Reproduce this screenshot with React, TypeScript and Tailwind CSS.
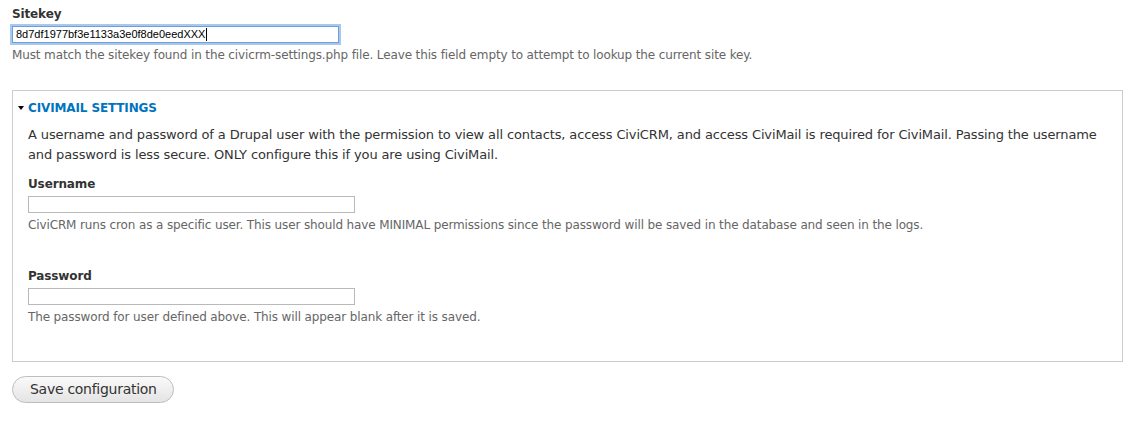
import React from "react";

const FONT = "font-['Lucida_Grande','DejaVu_Sans',sans-serif]";

function Description({ children }: { children: React.ReactNode }) {
  return <div className="mt-[4px] text-[12px] leading-[16px] text-[#666]">{children}</div>;
}

function FormItem({
  label,
  description,
  type = "text",
}: {
  label: string;
  description: string;
  type?: string;
}) {
  return (
    <div>
      <label className="block text-[12px] font-bold leading-[16px] text-[#333]">{label}</label>
      <input
        type={type}
        className="mt-[4px] block h-[17px] w-[327px] border border-[#b9b9b9] bg-white px-[3px] text-[11px] outline-none"
      />
      <Description>{description}</Description>
    </div>
  );
}

export default function App() {
  return (
    <div className={`min-h-screen bg-white px-[12px] pt-[6px] tracking-[-0.008em] text-[#333] ${FONT}`}>
      {/* sitekey */}
      <div>
        <label className="block text-[12px] font-bold leading-[16px]">Sitekey</label>
        <div className="mt-[4px] flex h-[17px] w-[327px] items-center border border-[#6e9fdc] bg-white pl-[3px] font-['Liberation_Sans',Arial,sans-serif] text-[11px] tracking-normal text-black shadow-[0_0_0_2px_#a9c8f0]">
          <span>8d7df1977bf3e1133a3e0f8de0eedXXX</span>
          <span className="ml-px h-[13px] w-px bg-black" />
        </div>
        <Description>
          Must match the sitekey found in the civicrm-settings.php file. Leave this field empty to attempt to lookup the current site key.
        </Description>
      </div>

      {/* civimail fieldset */}
      <div className="mt-[27px] border border-[#cccccc] px-[15px] pb-[36px] pt-[9px]">
        <div className="flex items-center text-[12px] font-bold uppercase leading-[16px] text-[#0074bd]">
          <span className="ml-[-10px] mr-[4px] h-0 w-0 border-x-[3px] border-t-[4px] border-x-transparent border-t-black" />
          CiviMail Settings
        </div>
        <p className="mt-[9px] text-[13px] leading-[20px] text-[#333]">
          A username and password of a Drupal user with the permission to view all contacts, access CiviCRM, and access
          CiviMail is required for CiviMail. Passing the username and password is less secure. ONLY configure this if you
          are using CiviMail.
        </p>
        <div className="mt-[11px]">
          <FormItem
            label="Username"
            description="CiviCRM runs cron as a specific user. This user should have MINIMAL permissions since the password will be saved in the database and seen in the logs."
          />
        </div>
        <div className="mt-[35px]">
          <FormItem
            label="Password"
            type="password"
            description="The password for user defined above. This will appear blank after it is saved."
          />
        </div>
      </div>

      <button className="mt-[14px] h-[27px] w-[162px] rounded-[14px] border border-[#bdbdbd] bg-linear-to-b from-[#fafafa] to-[#e4e4e4] text-left indent-[17px] text-[14px] tracking-[-0.02em] text-[#333]">
        Save configuration
      </button>
    </div>
  );
}
